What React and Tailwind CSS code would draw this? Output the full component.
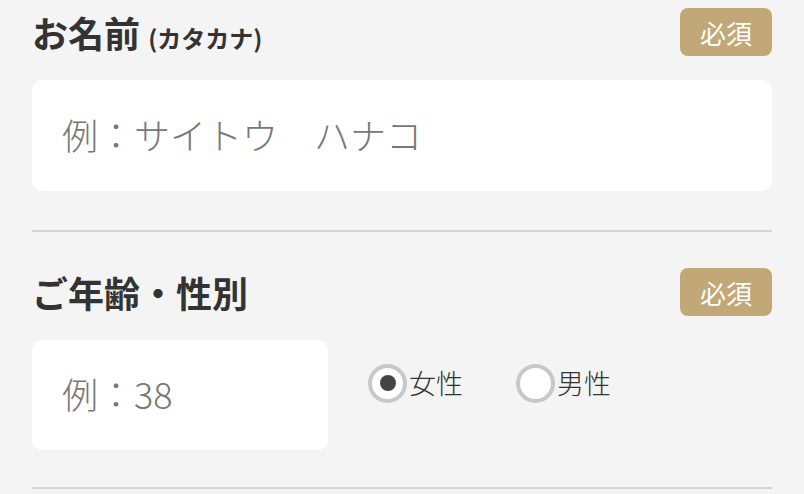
import React from "react";

const jp = { fontFamily: '"Noto Sans CJK JP", "Noto Sans", sans-serif' };

function Badge() {
  return (
    <span className="flex h-[48px] w-[92px] items-center justify-center rounded-[8px] bg-[#c2a877] text-[26px] font-normal text-white">
      必須
    </span>
  );
}

function Radio({ label, checked }) {
  return (
    <label className="flex items-center gap-[2px] text-[27px] font-light text-[#333]">
      <span className="flex h-[39px] w-[39px] items-center justify-center rounded-full border-[4px] border-[#c8c8c8] bg-white">
        {checked && <span className="h-[16px] w-[16px] rounded-full bg-[#444]" />}
      </span>
      {label}
    </label>
  );
}

export default function App() {
  return (
    <div className="min-h-screen bg-[#f4f4f4] px-[32px] pt-[8px]" style={jp}>
      {/* お名前 */}
      <section className="border-b-2 border-[#d4d4d4] pb-[39px]">
        <div className="flex h-[48px] items-center justify-between">
          <h2 className="text-[36px] font-bold text-[#333]">
            お名前 <span className="text-[24px]">(カタカナ)</span>
          </h2>
          <Badge />
        </div>
        <input
          type="text"
          placeholder="例：サイトウ　ハナコ"
          className="mt-[24px] block h-[111px] w-full rounded-[10px] bg-white pb-[4px] pl-[30px] text-[36px] font-light text-[#333] outline-none placeholder:text-[#777]"
        />
      </section>

      {/* ご年齢・性別 */}
      <section className="border-b-2 border-[#d4d4d4] pb-[37px] pt-[36px]">
        <div className="flex h-[48px] items-center justify-between">
          <h2 className="text-[36px] font-bold text-[#333]">ご年齢・性別</h2>
          <Badge />
        </div>
        <div className="mt-[24px] flex items-start gap-[40px]">
          <input
            type="text"
            placeholder="例：38"
            className="block h-[110px] w-[296px] rounded-[10px] bg-white pb-[4px] pl-[30px] text-[36px] font-light text-[#333] outline-none placeholder:text-[#777]"
          />
          <div className="flex gap-[53px] pt-[23px]">
            <Radio label="女性" checked />
            <Radio label="男性" />
          </div>
        </div>
      </section>
    </div>
  );
}
